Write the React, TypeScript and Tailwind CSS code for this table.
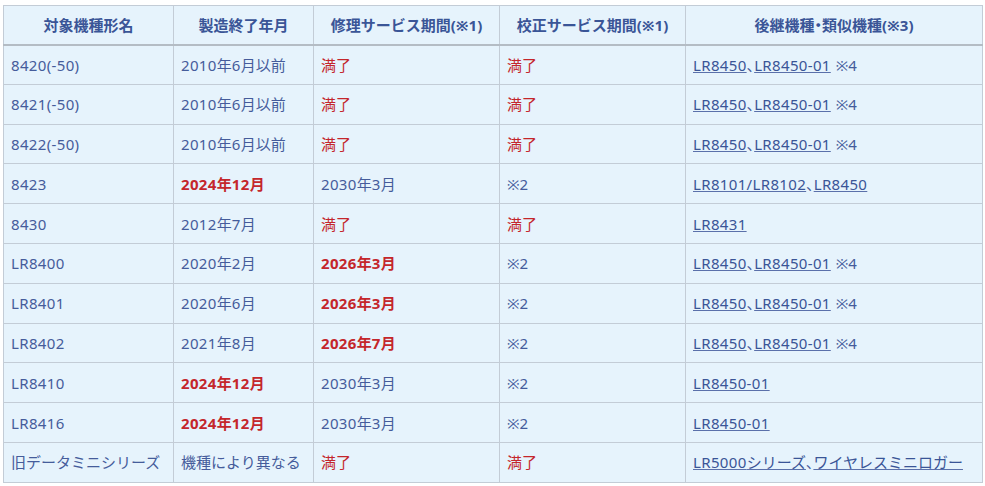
import React from 'react';

type Cell = { text: string; kind?: 'red' | 'redBold' };
type Row = {
  model: string;
  end: Cell;
  repair: Cell;
  calib: Cell;
  links: string[];
  note?: string;
};

const rows: Row[] = [
  { model: '8420(-50)', end: { text: '2010年6月以前' }, repair: { text: '満了', kind: 'red' }, calib: { text: '満了', kind: 'red' }, links: ['LR8450', 'LR8450-01'], note: '※4' },
  { model: '8421(-50)', end: { text: '2010年6月以前' }, repair: { text: '満了', kind: 'red' }, calib: { text: '満了', kind: 'red' }, links: ['LR8450', 'LR8450-01'], note: '※4' },
  { model: '8422(-50)', end: { text: '2010年6月以前' }, repair: { text: '満了', kind: 'red' }, calib: { text: '満了', kind: 'red' }, links: ['LR8450', 'LR8450-01'], note: '※4' },
  { model: '8423', end: { text: '2024年12月', kind: 'redBold' }, repair: { text: '2030年3月' }, calib: { text: '※2' }, links: ['LR8101/LR8102', 'LR8450'] },
  { model: '8430', end: { text: '2012年7月' }, repair: { text: '満了', kind: 'red' }, calib: { text: '満了', kind: 'red' }, links: ['LR8431'] },
  { model: 'LR8400', end: { text: '2020年2月' }, repair: { text: '2026年3月', kind: 'redBold' }, calib: { text: '※2' }, links: ['LR8450', 'LR8450-01'], note: '※4' },
  { model: 'LR8401', end: { text: '2020年6月' }, repair: { text: '2026年3月', kind: 'redBold' }, calib: { text: '※2' }, links: ['LR8450', 'LR8450-01'], note: '※4' },
  { model: 'LR8402', end: { text: '2021年8月' }, repair: { text: '2026年7月', kind: 'redBold' }, calib: { text: '※2' }, links: ['LR8450', 'LR8450-01'], note: '※4' },
  { model: 'LR8410', end: { text: '2024年12月', kind: 'redBold' }, repair: { text: '2030年3月' }, calib: { text: '※2' }, links: ['LR8450-01'] },
  { model: 'LR8416', end: { text: '2024年12月', kind: 'redBold' }, repair: { text: '2030年3月' }, calib: { text: '※2' }, links: ['LR8450-01'] },
  { model: '旧データミニシリーズ', end: { text: '機種により異なる' }, repair: { text: '満了', kind: 'red' }, calib: { text: '満了', kind: 'red' }, links: ['LR5000シリーズ', 'ワイヤレスミニロガー'] },
];

// latin runs get a little extra tracking so digits come out as wide as the original's
function T({ text }: { text: string }) {
  return (
    <>
      {text.split(/([\x20-\x7E]+)/).map((part, i) =>
        /^[\x20-\x7E]+$/.test(part) ? (
          <span key={i} className="tracking-[0.35px]">
            {part}
          </span>
        ) : (
          <span key={i}>{part}</span>
        )
      )}
    </>
  );
}

function ValueCell({ cell }: { cell: Cell }) {
  const cls =
    cell.kind === 'redBold'
      ? 'text-[#c4262b] font-bold'
      : cell.kind === 'red'
      ? 'text-[#c4262b]'
      : 'text-[#455c9b]';
  return (
    <td className="border border-[#c3ccd6] px-[7px] h-[39.8px] align-middle">
      <span className={cls}>
        <T text={cell.text} />
      </span>
    </td>
  );
}

export default function App() {
  return (
    <div className="w-[985px] h-[486px] bg-white pt-[5px] pl-[3px]">
      <table
        className="border-collapse bg-[#e6f3fc] text-[15px] leading-[20px] text-[#455c9b]"
        style={{ fontFamily: '"Noto Sans", "Noto Sans CJK JP", sans-serif' }}
      >
        <colgroup>
          <col className="w-[170px]" />
          <col className="w-[140px]" />
          <col className="w-[186px]" />
          <col className="w-[186px]" />
          <col className="w-[297px]" />
        </colgroup>
        <thead>
          <tr className="h-[39px]">
            <th className="border border-[#c3ccd6] border-b-2 border-b-[#b4bcc4] px-[7px] font-bold text-center text-[#3a5597]">対象機種形名</th>
            <th className="border border-[#c3ccd6] border-b-2 border-b-[#b4bcc4] px-[7px] font-bold text-center text-[#3a5597]">製造終了年月</th>
            <th className="border border-[#c3ccd6] border-b-2 border-b-[#b4bcc4] px-[7px] font-bold text-center text-[#3a5597]">修理サービス期間(※1)</th>
            <th className="border border-[#c3ccd6] border-b-2 border-b-[#b4bcc4] px-[7px] font-bold text-center text-[#3a5597]">校正サービス期間(※1)</th>
            <th className="border border-[#c3ccd6] border-b-2 border-b-[#b4bcc4] px-[7px] font-bold text-center text-[#3a5597]">
              後継機種<span className="[font-feature-settings:'palt']">・</span>類似機種(※3)
            </th>
          </tr>
        </thead>
        <tbody>
          {rows.map((r) => (
            <tr key={r.model}>
              <td className="border border-[#c3ccd6] px-[7px] h-[39.8px] align-middle">
                <T text={r.model} />
              </td>
              <ValueCell cell={r.end} />
              <ValueCell cell={r.repair} />
              <ValueCell cell={r.calib} />
              <td className="border border-[#c3ccd6] px-[7px] h-[39.8px] align-middle">
                {r.links.map((l, i) => (
                  <React.Fragment key={l}>
                    {i > 0 && <span className="[font-feature-settings:'palt']">、</span>}
                    <a href="#" className="underline decoration-[#5a70aa] text-[#3a5597]">
                      <T text={l} />
                    </a>
                  </React.Fragment>
                ))}
                {r.note && <span className="ml-[5px] text-[#455c9b]">{r.note}</span>}
              </td>
            </tr>
          ))}
        </tbody>
      </table>
    </div>
  );
}
